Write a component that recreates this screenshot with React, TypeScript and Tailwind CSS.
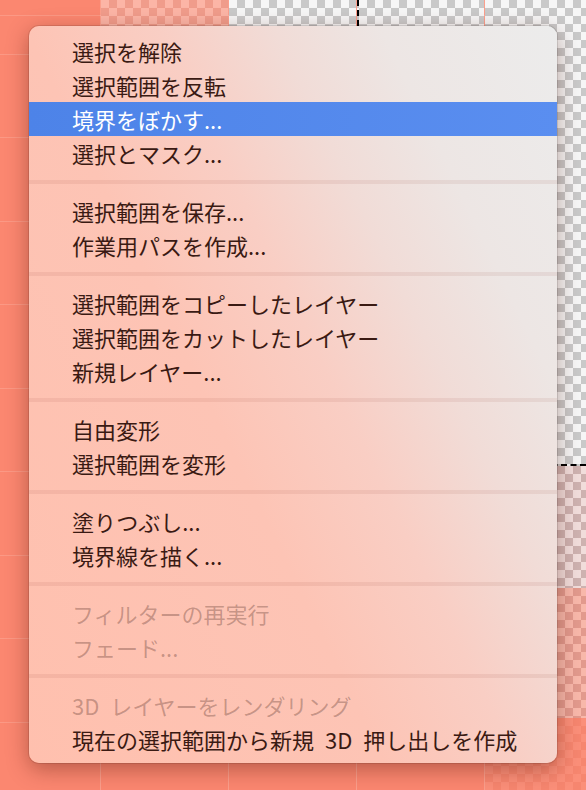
import React from "react";

type Entry =
  | { kind: "item"; label: string; disabled?: boolean; active?: boolean }
  | { kind: "sep" };

const entries: Entry[] = [
  { kind: "item", label: "選択を解除" },
  { kind: "item", label: "選択範囲を反転" },
  { kind: "item", label: "境界をぼかす...", active: true },
  { kind: "item", label: "選択とマスク..." },
  { kind: "sep" },
  { kind: "item", label: "選択範囲を保存..." },
  { kind: "item", label: "作業用パスを作成..." },
  { kind: "sep" },
  { kind: "item", label: "選択範囲をコピーしたレイヤー" },
  { kind: "item", label: "選択範囲をカットしたレイヤー" },
  { kind: "item", label: "新規レイヤー..." },
  { kind: "sep" },
  { kind: "item", label: "自由変形" },
  { kind: "item", label: "選択範囲を変形" },
  { kind: "sep" },
  { kind: "item", label: "塗りつぶし..." },
  { kind: "item", label: "境界線を描く..." },
  { kind: "sep" },
  { kind: "item", label: "フィルターの再実行", disabled: true },
  { kind: "item", label: "フェード...", disabled: true },
  { kind: "sep" },
  { kind: "item", label: "3D レイヤーをレンダリング", disabled: true },
  { kind: "item", label: "現在の選択範囲から新規 3D 押し出しを作成" },
];

const grayChecker =
  "bg-[image:conic-gradient(#c9c9c9_25%,#f6f6f6_0_50%,#c9c9c9_0_75%,#f6f6f6_0)] bg-[length:16px_16px]";

function Canvas() {
  return (
    <div className="flex h-full w-full">
      <div className="w-[100px] shrink-0" />
      <div className="flex w-[128px] shrink-0 flex-col border-l border-white/20">
        <div className="h-[300px] bg-[image:conic-gradient(#f09c8b_25%,#fcb5a6_0_50%,#f09c8b_0_75%,#fcb5a6_0)] bg-[length:16px_16px]" />
      </div>
      <div className="flex w-[128px] shrink-0 flex-col border-l border-white/20">
        <div className={"h-[465px] " + grayChecker} />
      </div>
      <div className="flex w-[128px] shrink-0 flex-col border-l border-white/20">
        <div className={"h-[466px] border-l-2 border-b-2 border-dashed border-black " + grayChecker} />
      </div>
      <div className="flex flex-1 flex-col border-l border-white/20">
        <div className={"h-[466px] border-b-2 border-dashed border-black " + grayChecker} />
        <div className="h-[122px] bg-[image:conic-gradient(#ceb2b0_25%,#f1dddb_0_50%,#ceb2b0_0_75%,#f1dddb_0)] bg-[length:16px_16px]" />
        <div className="h-[130px] bg-[image:conic-gradient(#e29a8d_25%,#f8b8aa_0_50%,#e29a8d_0_75%,#f8b8aa_0)] bg-[length:16px_16px]" />
        <div className="flex-1 bg-[image:conic-gradient(#f6866f_25%,#fb8f79_0_50%,#f6866f_0_75%,#fb8f79_0)] bg-[length:16px_16px]" />
      </div>
    </div>
  );
}

function Menu() {
  return (
    <div className="absolute left-[29px] top-[26px] flex w-[528px] flex-col overflow-hidden rounded-[10px] pt-[8px] pb-[7px] bg-[linear-gradient(64deg,#ffc0ae_0%,#fdc4b5_40%,#f9cec4_55%,#f1dcd7_68%,#ede6e4_80%,#ececec_100%)] shadow-[0_6px_22px_rgba(70,15,5,0.38)] ring-1 ring-black/10">
      {entries.map((e, i) =>
        e.kind === "sep" ? (
          <div key={i} className="my-[10px] h-[4px] bg-[#7a2a18]/[0.08]" />
        ) : (
          <div
            key={i}
            className={
              "flex h-[34px] items-center pl-[43px] text-[22px] leading-none whitespace-nowrap [word-spacing:6px] " +
              (e.active
                ? "bg-[linear-gradient(to_right,#4d83e8,#5a8ef0)] text-white"
                : e.disabled
                ? "text-[#3f1d16]/30"
                : "text-[#3a1a13]")
            }
          >
            {e.label}
          </div>
        )
      )}
    </div>
  );
}

export default function App() {
  return (
    <div className="relative h-[790px] w-[586px] overflow-hidden bg-[#fb8770] bg-[image:repeating-linear-gradient(to_bottom,rgba(255,255,255,0.15)_0_1px,transparent_1px_83.5px)] bg-[position:0_54px] font-['Hiragino_Sans','Noto_Sans_CJK_JP',sans-serif]">
      <Canvas />
      <Menu />
    </div>
  );
}
